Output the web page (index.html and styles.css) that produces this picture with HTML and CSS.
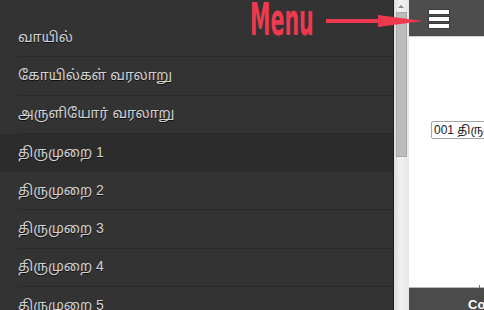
FILE: index.html
```html
<!DOCTYPE html>
<html lang="ta">
<head>
  <meta charset="UTF-8">
  <title>திருமுறை</title>
  <link rel="stylesheet" href="styles.css">
</head>
<body>

  <nav class="side-menu">
    <ul>
      <li><a href="#">வாயில்</a></li>
      <li><a href="#">கோயில்கள் வரலாறு</a></li>
      <li><a href="#">அருளியோர் வரலாறு</a></li>
      <li class="active"><a href="#">திருமுறை 1</a></li>
      <li><a href="#">திருமுறை 2</a></li>
      <li><a href="#">திருமுறை 3</a></li>
      <li><a href="#">திருமுறை 4</a></li>
      <li><a href="#">திருமுறை 5</a></li>
    </ul>
  </nav>

  <div class="scrollbar">
    <span class="arrow-up"></span>
    <span class="thumb"></span>
  </div>

  <main class="page">
    <header class="topbar">
      <button class="menu-btn" aria-label="Menu">
        <span></span><span></span><span></span>
      </button>
    </header>
    <div class="content">
      <select class="picker">
        <option>001 திருமுறை</option>
      </select>
    </div>
    <footer class="bottombar">
      <span class="tick"></span>
      <span class="label">Contents</span>
    </footer>
  </main>

  <div class="callout">
    <span class="callout-text">Menu</span>
    <svg class="callout-arrow" width="100" height="16" viewBox="0 0 100 16">
      <rect x="0" y="6" width="60" height="4" fill="#f0394f"/>
      <polygon points="52,2 97,8 52,14" fill="#f0394f"/>
    </svg>
  </div>

</body>
</html>
```

FILE: styles.css
```css
* {
  box-sizing: border-box;
}

html, body {
  height: 100%;
}

body {
  margin: 0;
  display: flex;
  overflow: hidden;
  font-family: 'Liberation Sans', 'Noto Sans Tamil', Arial, sans-serif;
  background-color: #ffffff;
}

/* left drawer */
.side-menu {
  width: 393px;
  flex: none;
  background-color: #333333;
  overflow: hidden;
}

.side-menu ul {
  list-style: none;
  margin: 0;
  padding: 19px 0 0;
}

.side-menu li {
  padding-left: 18px;
}

.side-menu li.active {
  background-color: #2c2c2c;
}

.side-menu a {
  display: flex;
  align-items: center;
  height: 38.3px;
  border-bottom: 1px solid #2a2a2a;
  color: #d2d2d2;
  font-size: 14px;
  text-decoration: none;
  text-shadow: 0 1px 0 #111;
}

/* fake scrollbar */
.scrollbar {
  width: 16px;
  flex: none;
  position: relative;
  border-left: 1px solid #1e1e1e;
  background: linear-gradient(to right, #dcdcdc, #f1f1f1 40%, #e6e6e6);
}

.arrow-up {
  position: absolute;
  top: 5px;
  left: 4px;
  border-left: 3px solid transparent;
  border-right: 3px solid transparent;
  border-bottom: 3px solid #8a8a8a;
}

.thumb {
  position: absolute;
  top: 12px;
  left: 2px;
  width: 11px;
  height: 145px;
  background-color: #bcbcbc;
  border: 1px solid #a9a9a9;
}

/* right page */
.page {
  flex: 1;
  min-width: 0;
  display: flex;
  flex-direction: column;
  overflow: hidden;
}

.topbar {
  height: 37px;
  flex: none;
  background-color: #4d4d4d;
  border-bottom: 1px solid #cfcfcf;
  padding: 9px 0 0 19px;
}

.menu-btn {
  display: flex;
  flex-direction: column;
  gap: 1px;
  padding: 0;
  border: none;
  background: none;
}

.menu-btn span {
  width: 22px;
  height: 6px;
  background-color: #ffffff;
  border: 1px solid #3a3a3a;
}

.content {
  flex: 1;
  padding: 83px 0 0 22px;
}

.picker {
  height: 18px;
  width: 120px;
  padding: 0 2px;
  font-family: 'Liberation Sans', 'Noto Sans Tamil', Arial, sans-serif;
  font-size: 12px;
  color: #222;
  background-color: #fff;
  border: 1px solid #a6a6a6;
  border-radius: 2px;
  appearance: none;
}

.bottombar {
  height: 23px;
  flex: none;
  position: relative;
  background-color: #4b4b4b;
  border-top: 1px solid #b8b8b8;
  padding: 7px 0 0 59px;
  white-space: nowrap;
}

.bottombar .label {
  color: #ffffff;
  font-size: 13px;
  font-weight: bold;
}

.tick {
  position: absolute;
  top: -3px;
  left: 70px;
  width: 1px;
  height: 3px;
  background-color: #777;
}

/* annotation drawn over the screenshot */
.callout {
  position: absolute;
  top: 0;
  left: 250px;
  display: flex;
  align-items: flex-start;
}

.callout-text {
  display: inline-block;
  width: 64px;
  color: #f0394f;
  font-family: 'DejaVu Sans Condensed', 'DejaVu Sans', sans-serif;
  font-size: 44px;
  line-height: 40px;
  font-weight: bold;
  transform: scaleX(0.52);
  transform-origin: left top;
}

.callout-arrow {
  margin: 13px 0 0 12px;
}
```
